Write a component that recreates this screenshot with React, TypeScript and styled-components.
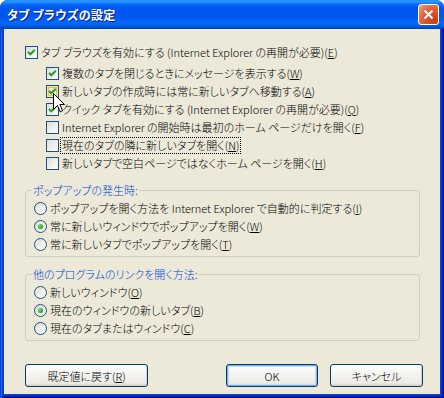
import styled, { createGlobalStyle } from 'styled-components';

const GlobalStyle = createGlobalStyle`
    html, body {
        margin: 0;
        padding: 0;
        background: #ffffff;
    }
    body {
        font-family: "Noto Sans CJK JP", "Liberation Sans", sans-serif;
        font-size: 11px;
        font-weight: 300;
        color: #000000;
        font-feature-settings: "palt";
    }
`;

const Window = styled.div`
    position: relative;
    width: 444px;
    height: 398px;
    display: flex;
    flex-direction: column;
    border-radius: 8px 8px 0 0;
    overflow: hidden;
    background: #0831d9;
`;

const TitleBar = styled.div`
    flex: none;
    height: 29px;
    display: flex;
    align-items: center;
    justify-content: space-between;
    padding: 0 5px 0 7px;
    background: linear-gradient(
        180deg,
        #0997ff 0%,
        #3a93ff 6%,
        #1a80ff 10%,
        #0366fb 16%,
        #0058ee 26%,
        #0055eb 56%,
        #005bf5 66%,
        #026afe 76%,
        #0062ef 86%,
        #0052d6 94%,
        #0040ab 100%
    );
`;

const Title = styled.span`
    color: #ffffff;
    font-weight: bold;
    font-size: 12px;
    text-shadow: 1px 1px #0a1b8f;
    letter-spacing: 0.3px;
`;

const CloseButton = styled.div`
    width: 21px;
    height: 21px;
    box-sizing: border-box;
    border: 1px solid #ffffff;
    border-radius: 3px;
    display: flex;
    align-items: center;
    justify-content: center;
    background: radial-gradient(circle at 85% 85%, #c8401a 0%, #e0582f 50%, #e77352 72%, #f6b09a 100%);
    svg {
        width: 11px;
        height: 11px;
    }
`;

const Frame = styled.div`
    flex: 1;
    display: flex;
    padding: 0 4px 4px 4px;
    background: #0841d6;
    box-shadow: inset 1px 0 #0f3fd0, inset 2px 0 #1660ec, inset -1px -1px #00138c, inset -2px -2px #001ea0,
        inset -3px -3px #0837d0;
`;

const Body = styled.div`
    flex: 1;
    display: flex;
    flex-direction: column;
    padding: 14px 17px 0 21px;
    background: #ece9d8;
`;

const Row = styled.label<{ $indent?: number; $gapBelow?: number }>`
    display: flex;
    align-items: center;
    gap: 2px;
    height: 18px;
    padding-left: ${(p) => p.$indent ?? 0}px;
    margin-bottom: ${(p) => p.$gapBelow ?? 0}px;
    white-space: nowrap;
`;

const Check = styled.span<{ $hot?: boolean }>`
    flex: none;
    width: 13px;
    height: 13px;
    box-sizing: border-box;
    border: 1px solid #1c5180;
    display: flex;
    align-items: center;
    justify-content: center;
    background: linear-gradient(135deg, #dcdcd7 0%, #ffffff 100%);
    box-shadow: ${(p) => (p.$hot ? 'inset 0 0 0 1px #f9e2a7, inset 0 0 0 2px #f5b84a' : 'none')};
    svg {
        width: 11px;
        height: 11px;
    }
`;

const Radio = styled.span<{ $on?: boolean }>`
    flex: none;
    width: 13px;
    height: 13px;
    box-sizing: border-box;
    border: 1px solid #1c5180;
    border-radius: 50%;
    display: flex;
    align-items: center;
    justify-content: center;
    background: linear-gradient(135deg, #dcdcd7 0%, #ffffff 100%);
    &::after {
        content: '';
        display: ${(p) => (p.$on ? 'block' : 'none')};
        width: 5px;
        height: 5px;
        border-radius: 50%;
        background: radial-gradient(circle at 35% 35%, #6fe06b 0%, #2fb02c 55%, #1b8a18 100%);
    }
`;

const Text = styled.span<{ $focus?: boolean }>`
    line-height: 15px;
    padding: 0 1px;
    outline: ${(p) => (p.$focus ? '1px dotted #000000' : 'none')};
    u {
        text-decoration: underline;
        text-underline-offset: 1px;
    }
`;

const Group = styled.fieldset<{ $top: number }>`
    margin: ${(p) => p.$top}px 3px 0 0;
    padding: 1px 0 3px 8px;
    border: 1px solid #d0d0bf;
    border-radius: 3px;
    min-width: 0;
`;

const Legend = styled.legend`
    margin-left: -2px;
    padding: 0 1px;
    color: #0046d5;
    line-height: 16px;
`;

const ButtonRow = styled.div`
    display: flex;
    align-items: center;
    margin-top: 23px;
    gap: 12px;
`;

const Button = styled.button<{ $width: number; $default?: boolean }>`
    width: ${(p) => p.$width}px;
    height: 23px;
    padding: 0;
    font: inherit;
    color: #000000;
    border: 1px solid #003c74;
    border-radius: 3px;
    background: linear-gradient(180deg, #ffffff 0%, #f4f4f0 40%, #ecebe6 86%, #d6d0c5 100%);
    box-shadow: ${(p) => (p.$default ? 'inset 0 0 0 1px #89ade4, inset 0 0 0 2px #c6dcfb' : 'inset -1px -1px #d6d0c5')};
    &:first-child {
        margin-right: auto;
    }
`;

const Cursor = styled.svg`
    position: absolute;
    left: 53px;
    top: 93px;
    width: 12px;
    height: 20px;
`;

const CheckMark = () => (
    <svg viewBox="0 0 11 11">
        <polyline points="2,5 4.3,7.3 8.8,2.8" fill="none" stroke="#21a121" strokeWidth="2" />
    </svg>
);

type Item = { label: React.ReactNode; indent?: number; on?: boolean; hot?: boolean; focus?: boolean; gap?: number };

const checks: Item[] = [
    { label: <>タブ ブラウズを有効にする (Internet Explorer の再開が必要)(<u>E</u>)</>, on: true, gap: 3 },
    { label: <>複数のタブを閉じるときにメッセージを表示する(<u>W</u>)</>, indent: 21, on: true },
    { label: <>新しいタブの作成時には常に新しいタブへ移動する(<u>A</u>)</>, indent: 21, on: true, hot: true },
    { label: <>クイック タブを有効にする (Internet Explorer の再開が必要)(<u>Q</u>)</>, indent: 21, on: true },
    { label: <>Internet Explorer の開始時は最初のホーム ページだけを開く(<u>F</u>)</>, indent: 21 },
    { label: <>現在のタブの隣に新しいタブを開く(<u>N</u>)</>, indent: 21, focus: true },
    { label: <>新しいタブで空白ページではなくホーム ページを開く(<u>H</u>)</>, indent: 21 },
];

const popups: Item[] = [
    { label: <>ポップアップを開く方法を Internet Explorer で自動的に判定する(<u>I</u>)</> },
    { label: <>常に新しいウィンドウでポップアップを開く(<u>W</u>)</>, on: true },
    { label: <>常に新しいタブでポップアップを開く(<u>T</u>)</> },
];

const links: Item[] = [
    { label: <>新しいウィンドウ(<u>O</u>)</> },
    { label: <>現在のウィンドウの新しいタブ(<u>B</u>)</>, on: true },
    { label: <>現在のタブまたはウィンドウ(<u>C</u>)</> },
];

const RadioList = ({ items }: { items: Item[] }) => (
    <>
        {items.map((item, i) => (
            <Row key={i}>
                <Radio $on={item.on} />
                <Text>{item.label}</Text>
            </Row>
        ))}
    </>
);

export default function App() {
    return (
        <>
            <GlobalStyle />
            <Window>
                <TitleBar>
                    <Title>タブ ブラウズの設定</Title>
                    <CloseButton>
                        <svg viewBox="0 0 11 11">
                            <path d="M1.5 1.5 L9.5 9.5 M9.5 1.5 L1.5 9.5" stroke="#ffffff" strokeWidth="2" />
                        </svg>
                    </CloseButton>
                </TitleBar>
                <Frame>
                    <Body>
                        {checks.map((item, i) => (
                            <Row key={i} $indent={item.indent} $gapBelow={item.gap}>
                                <Check $hot={item.hot}>{item.on && <CheckMark />}</Check>
                                <Text $focus={item.focus}>{item.label}</Text>
                            </Row>
                        ))}
                        <Group $top={10}>
                            <Legend>ポップアップの発生時:</Legend>
                            <RadioList items={popups} />
                        </Group>
                        <Group $top={9}>
                            <Legend>他のプログラムのリンクを開く方法:</Legend>
                            <RadioList items={links} />
                        </Group>
                        <ButtonRow>
                            <Button $width={123}>
                                既定値に戻す(<u>R</u>)
                            </Button>
                            <Button $width={92} $default>
                                OK
                            </Button>
                            <Button $width={93}>キャンセル</Button>
                        </ButtonRow>
                    </Body>
                </Frame>
                <Cursor viewBox="0 0 12 20">
                    <path d="M0.5 0.5 L0.5 16.5 L4.5 12.5 L7.2 18.8 L9.6 17.8 L6.9 11.5 L11.5 11.5 Z" fill="#ffffff" stroke="#000000" strokeWidth="1" />
                </Cursor>
            </Window>
        </>
    );
}
